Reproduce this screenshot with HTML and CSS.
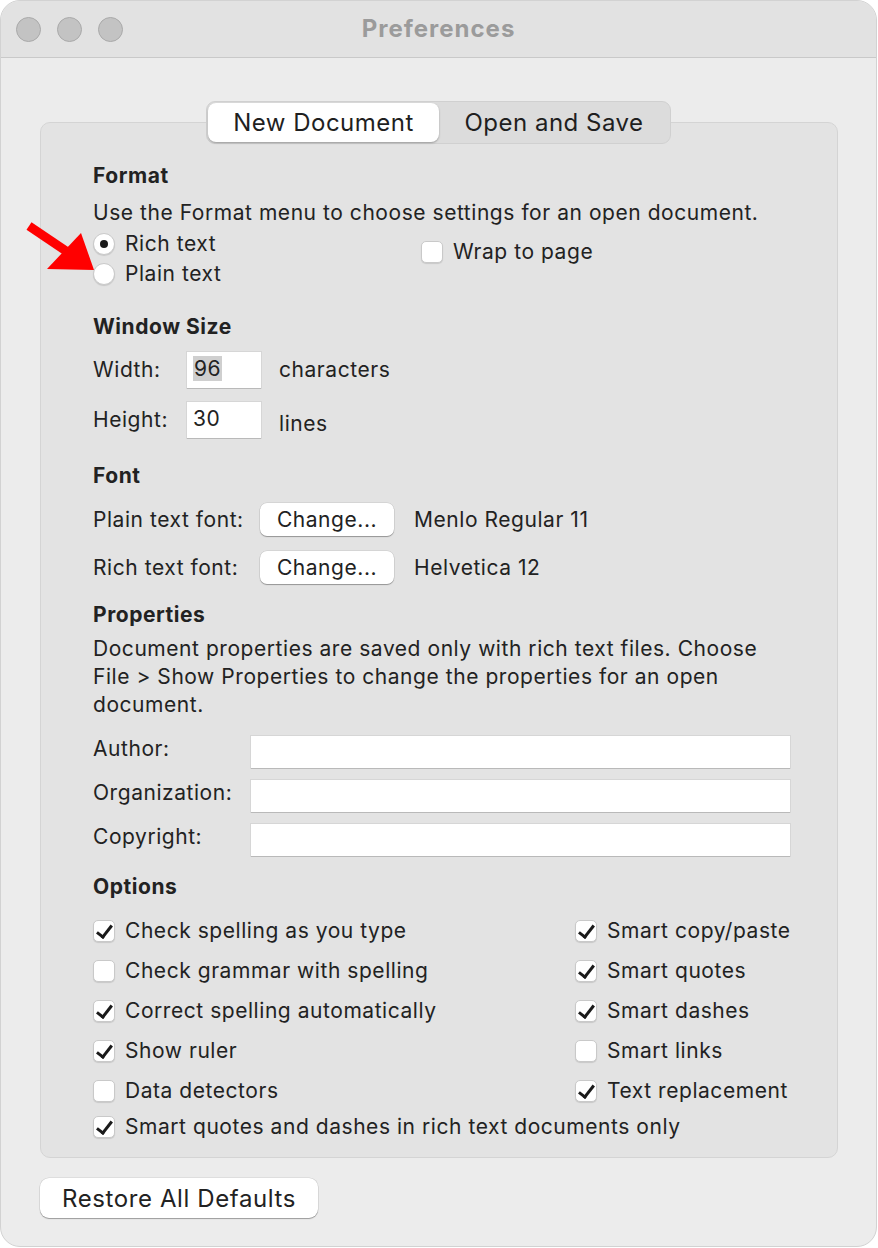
FILE: index.html
```html
<!DOCTYPE html>
<html lang="en">
<head>
    <meta charset="UTF-8">
    <title>Preferences</title>
    <link rel="stylesheet" href="styles.css">
</head>
<body>
    <div class="window">
        <div class="titlebar">
            <div class="lights">
                <span class="light"></span>
                <span class="light"></span>
                <span class="light"></span>
            </div>
            <div class="title">Preferences</div>
            <div></div>
        </div>

        <div class="main">
            <div class="tabs">
                <span class="tab active">New Document</span>
                <span class="tab">Open and Save</span>
            </div>

            <div class="box">
                <!-- Format -->
                <h3>Format</h3>
                <p class="desc">Use the Format menu to choose settings for an open document.</p>
                <div class="format-row">
                    <div class="radios">
                        <label class="radio-row"><span class="radio on"></span>Rich text</label>
                        <label class="radio-row"><span class="radio"></span>Plain text</label>
                    </div>
                    <label class="check-row wrap"><span class="check"></span>Wrap to page</label>
                </div>

                <!-- Window Size -->
                <h3 class="sec">Window Size</h3>
                <div class="size-row first">
                    <span class="lbl-size">Width:</span>
                    <span class="field small"><span class="sel">96</span></span>
                    <span class="unit">characters</span>
                </div>
                <div class="size-row">
                    <span class="lbl-size">Height:</span>
                    <span class="field small">30</span>
                    <span class="unit lines">lines</span>
                </div>

                <!-- Font -->
                <h3 class="sec">Font</h3>
                <div class="font-row first">
                    <span class="lbl-font">Plain text font:</span>
                    <span class="btn">Change...</span>
                    <span>Menlo Regular 11</span>
                </div>
                <div class="font-row">
                    <span class="lbl-font">Rich text font:</span>
                    <span class="btn">Change...</span>
                    <span>Helvetica 12</span>
                </div>

                <!-- Properties -->
                <h3 class="sec props">Properties</h3>
                <p class="desc">Document properties are saved only with rich text files. Choose File &gt; Show Properties to change the properties for an open document.</p>
                <div class="prop-row first">
                    <span class="lbl-prop">Author:</span>
                    <span class="field wide"></span>
                </div>
                <div class="prop-row">
                    <span class="lbl-prop">Organization:</span>
                    <span class="field wide"></span>
                </div>
                <div class="prop-row">
                    <span class="lbl-prop">Copyright:</span>
                    <span class="field wide"></span>
                </div>

                <!-- Options -->
                <h3 class="sec opts">Options</h3>
                <div class="options">
                    <label class="check-row"><span class="check on"></span>Check spelling as you type</label>
                    <label class="check-row"><span class="check on"></span>Smart copy/paste</label>
                    <label class="check-row"><span class="check"></span>Check grammar with spelling</label>
                    <label class="check-row"><span class="check on"></span>Smart quotes</label>
                    <label class="check-row"><span class="check on"></span>Correct spelling automatically</label>
                    <label class="check-row"><span class="check on"></span>Smart dashes</label>
                    <label class="check-row"><span class="check on"></span>Show ruler</label>
                    <label class="check-row"><span class="check"></span>Smart links</label>
                    <label class="check-row"><span class="check"></span>Data detectors</label>
                    <label class="check-row"><span class="check on"></span>Text replacement</label>
                    <label class="check-row full"><span class="check on"></span>Smart quotes and dashes in rich text documents only</label>
                </div>
            </div>

            <div class="footer">
                <span class="btn big">Restore All Defaults</span>
            </div>
        </div>

        <!-- red annotation arrow -->
        <svg class="arrow" width="80" height="60" viewBox="0 0 80 60">
            <line x1="8" y1="10" x2="48" y2="37" stroke="#ff0000" stroke-width="9"/>
            <polygon points="73,54 26,53 60,17" fill="#ff0000"/>
        </svg>
    </div>
</body>
</html>
```

FILE: styles.css
```css
* {
    margin: 0;
    padding: 0;
    box-sizing: border-box;
}

body {
    background: #fff;
    font-family: "Inter", "Liberation Sans", sans-serif;
    font-size: 21px;
    letter-spacing: 0.55px;
    color: #222;
}

.window {
    position: relative;
    width: 877px;
    height: 1247px;
    background: #ececec;
    border: 1px solid #d2d2d2;
    border-radius: 20px;
    overflow: hidden;
}

.titlebar {
    height: 57px;
    background: #e2e2e2;
    border-bottom: 1px solid #c9c9c9;
    display: grid;
    grid-template-columns: 1fr auto 1fr;
    align-items: center;
}

.lights {
    display: flex;
    gap: 16px;
    padding-left: 15px;
}

.light {
    width: 25px;
    height: 25px;
    border-radius: 50%;
    background: #c3c3c3;
    border: 1px solid #a9a9a9;
}

.title {
    font-weight: 700;
    font-size: 24px;
    letter-spacing: 1px;
    color: #9b9b9b;
    margin-top: -2px;
}

.main {
    padding: 43px 39px 0 39px;
}

.tabs {
    position: relative;
    z-index: 1;
    display: flex;
    width: 465px;
    height: 43px;
    margin: 0 auto -22px;
    padding: 1px;
    background: #dcdcdc;
    border: 1px solid #d0d0d0;
    border-radius: 9px;
}

.tab {
    display: flex;
    align-items: center;
    justify-content: center;
    font-size: 24px;
    letter-spacing: 0.5px;
    color: #1f1f1f;
}

.tab.active {
    width: 231px;
    background: #fff;
    border-radius: 8px;
    box-shadow: 0 1px 2px rgba(0, 0, 0, 0.3);
}

.tab + .tab {
    flex: 1;
}

.box {
    background: #e3e3e3;
    border: 1px solid #d4d4d4;
    border-radius: 10px;
    width: 798px;
    padding: 39px 46px 14px 52px;
    line-height: 28px;
}

h3 {
    font-size: 21px;
    font-weight: 700;
    line-height: 28px;
}

.desc {
    margin-top: 9px;
}

.sec {
    margin-top: 24px;
}

.format-row {
    display: flex;
    margin-top: 2px;
}

.radios {
    width: 328px;
}

.radio-row, .check-row {
    display: flex;
    align-items: center;
    gap: 10px;
    height: 30px;
}

.radio {
    width: 22px;
    height: 22px;
    border-radius: 50%;
    background: #fff;
    border: 1px solid #c9c9c9;
    box-shadow: 0 1px 1px rgba(0, 0, 0, 0.12);
    display: flex;
    align-items: center;
    justify-content: center;
}

.radio.on::after {
    content: "";
    width: 8px;
    height: 8px;
    border-radius: 50%;
    background: #1a1a1a;
}

.check {
    position: relative;
    width: 22px;
    height: 22px;
    border-radius: 5px;
    background: #fff;
    border: 1px solid #c9c9c9;
    box-shadow: 0 1px 1px rgba(0, 0, 0, 0.12);
    flex-shrink: 0;
}

.check.on::after {
    content: "";
    position: absolute;
    left: 6px;
    top: 1px;
    width: 6px;
    height: 13px;
    border-right: 3.5px solid #1a1a1a;
    border-bottom: 3.5px solid #1a1a1a;
    transform: rotate(38deg);
}

.wrap {
    margin-top: 8px;
}

.size-row, .font-row, .prop-row {
    display: flex;
    align-items: center;
}

.size-row {
    height: 36px;
    margin-top: 14px;
}

.size-row.first {
    margin-top: 11px;
}

.lbl-size {
    width: 94px;
}

.field {
    background: #fff;
    box-shadow: 0 1px 0 #b9b9b9, 0 0 0 1px #d6d6d6;
}

.field.small {
    width: 74px;
    height: 36px;
    padding: 3px 6px;
    margin-right: 18px;
}

.sel {
    background: #cfcfcf;
    padding: 0 1px;
}

.unit.lines {
    padding-top: 7px;
}

.font-row {
    height: 33px;
    margin-top: 15px;
}

.font-row.first {
    margin-top: 13px;
}

.lbl-font {
    width: 167px;
}

.btn {
    display: inline-flex;
    align-items: center;
    justify-content: center;
    background: #fff;
    border-radius: 7px;
    box-shadow: 0 1px 1px rgba(0, 0, 0, 0.3), 0 0 0 0.5px rgba(0, 0, 0, 0.12);
    width: 134px;
    height: 33px;
    margin-right: 20px;
}

.props {
    margin-top: 17px;
}

.props + .desc {
    margin-top: 6px;
}

.prop-row {
    height: 32px;
    margin-top: 12px;
}

.prop-row.first {
    margin-top: 17px;
}

.lbl-prop {
    width: 158px;
    margin-bottom: 6px;
}

.field.wide {
    width: 539px;
    height: 32px;
}

.opts {
    margin-top: 17px;
}

.options {
    display: grid;
    grid-template-columns: 482px 1fr;
    grid-template-rows: repeat(5, 40px) 32px;
    margin-top: 10px;
}

.options .check-row {
    height: 40px;
}

.options .check-row.full {
    grid-column: 1 / 3;
    height: 32px;
}

.footer {
    padding-top: 20px;
}

.btn.big {
    width: 278px;
    height: 40px;
    font-size: 24px;
    letter-spacing: 0.6px;
    border-radius: 9px;
}

.arrow {
    position: absolute;
    left: 20px;
    top: 215px;
}
```
